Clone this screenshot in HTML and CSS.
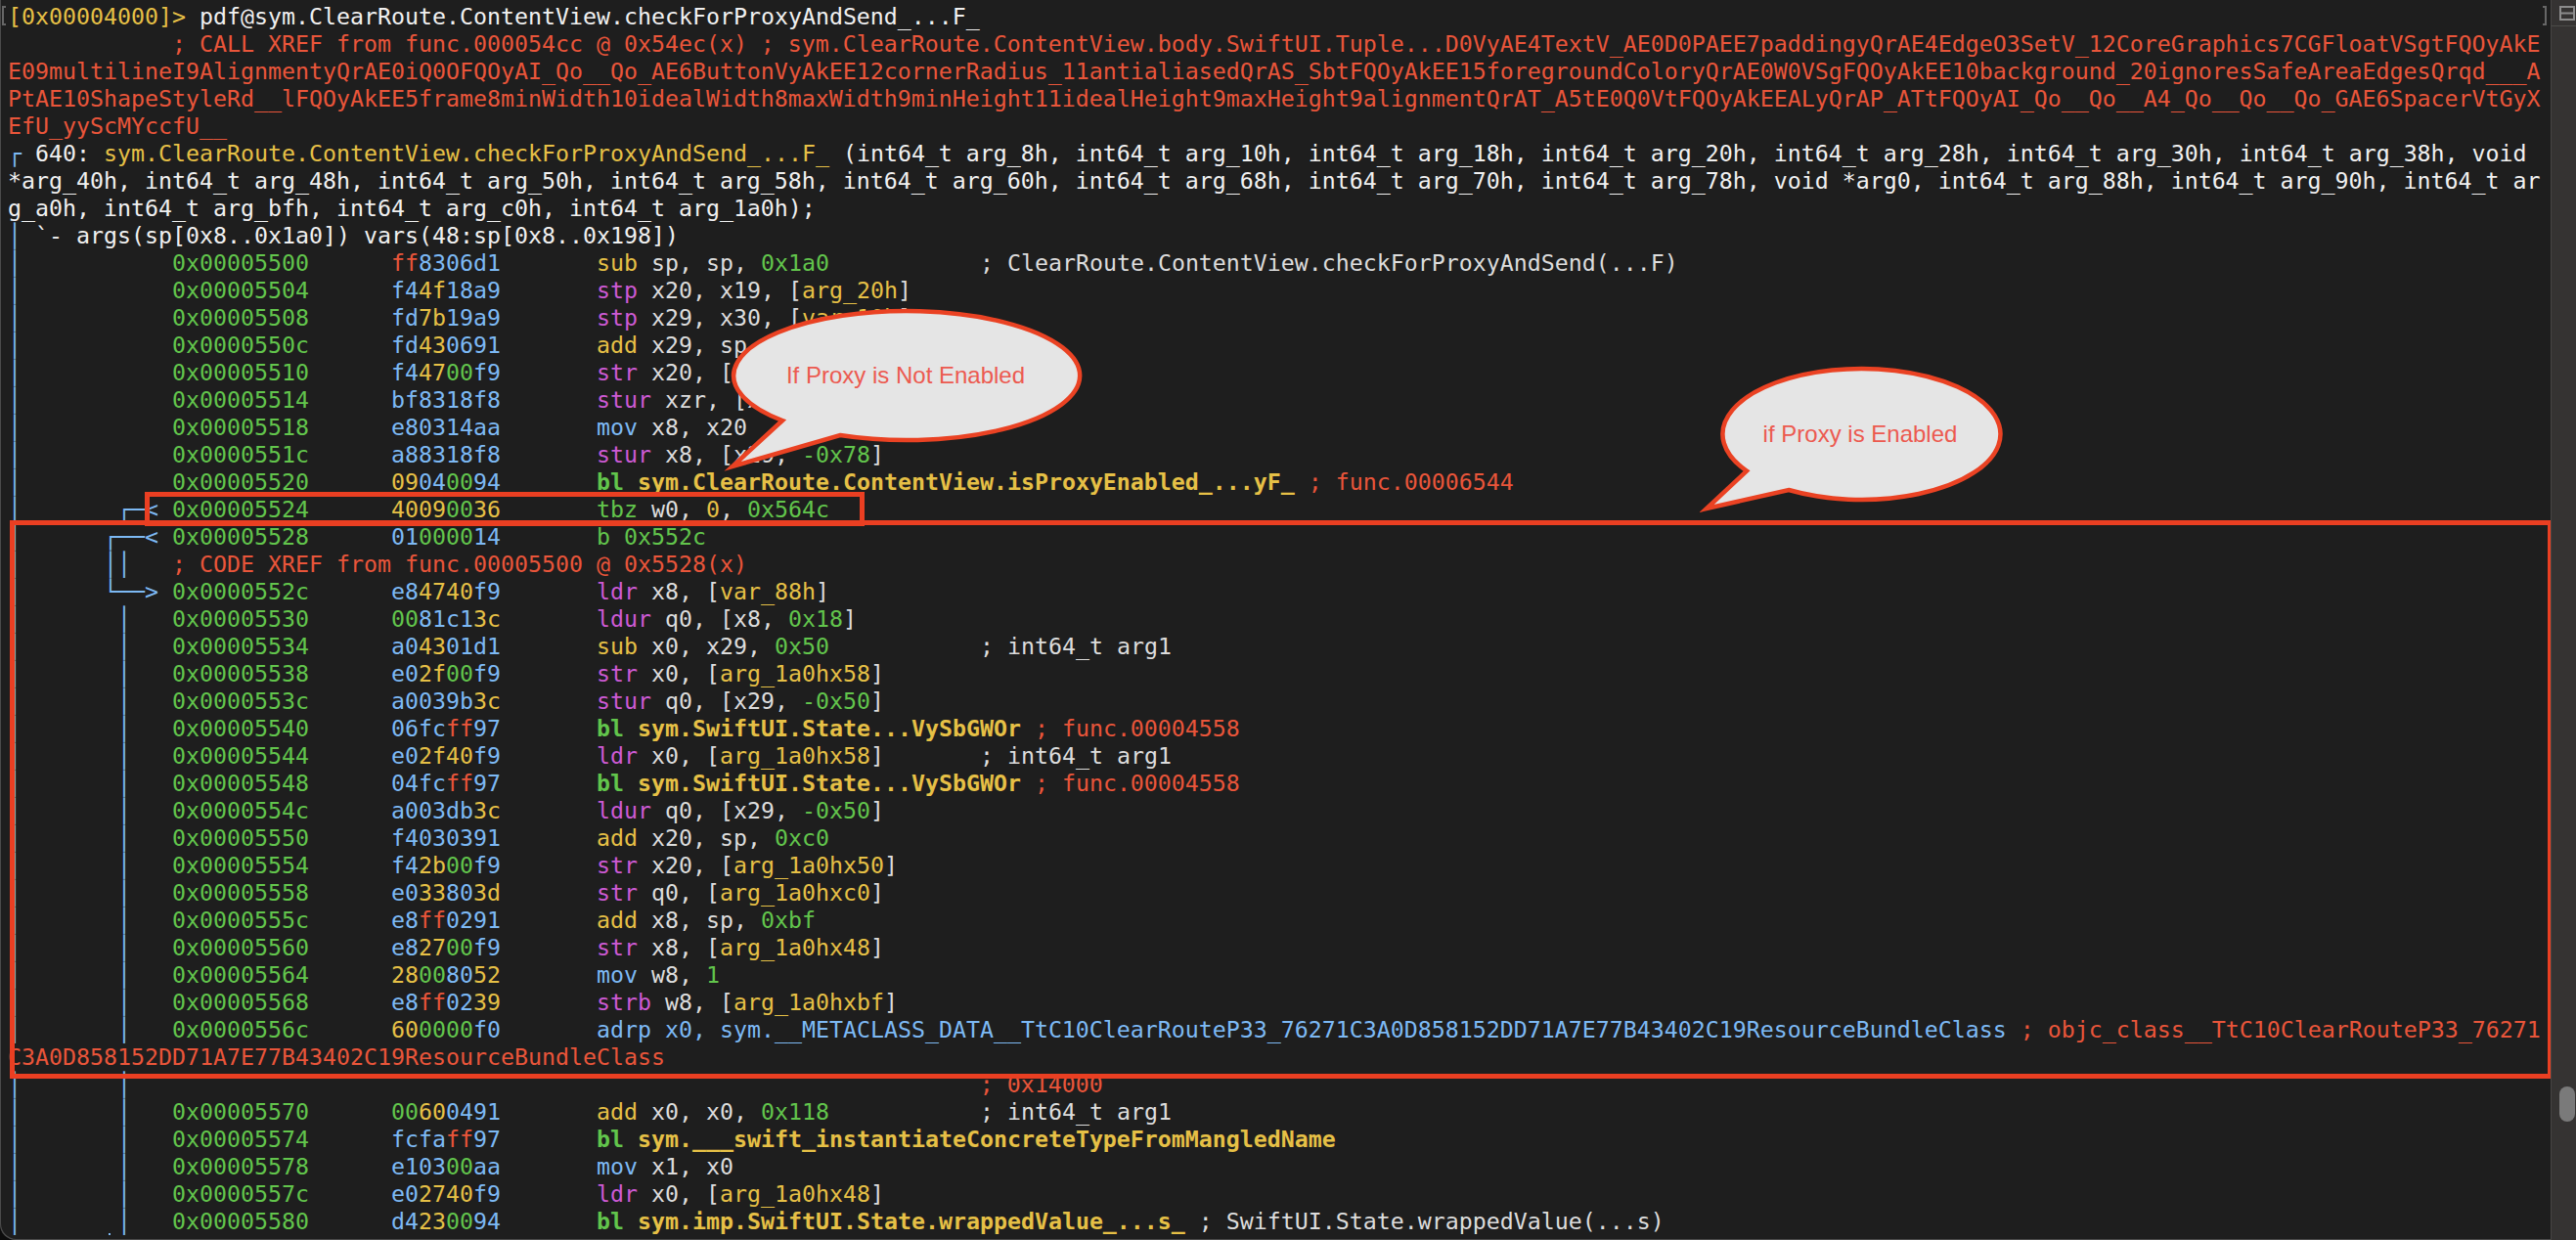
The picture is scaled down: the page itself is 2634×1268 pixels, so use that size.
FILE: index.html
```html
<!DOCTYPE html>
<html lang="en">
<head>
<meta charset="utf-8">
<title>radare2</title>
<link rel="stylesheet" href="styles.css">
</head>
<body>
<div class="window">
<main class="term">
<pre class="code"><span class="y">[0x00004000]&gt;</span> <span class="w">pdf@sym.ClearRoute.ContentView.checkForProxyAndSend_...F_</span>
<span class="r">            ; CALL XREF from func.000054cc @ 0x54ec(x) ; sym.ClearRoute.ContentView.body.SwiftUI.Tuple...D0VyAE4TextV_AE0D0PAEE7paddingyQrAE4EdgeO3SetV_12CoreGraphics7CGFloatVSgtFQOyAkE
E09multilineI9AlignmentyQrAE0iQ0OFQOyAI_Qo__Qo_AE6ButtonVyAkEE12cornerRadius_11antialiasedQrAS_SbtFQOyAkEE15foregroundColoryQrAE0W0VSgFQOyAkEE10background_20ignoresSafeAreaEdgesQrqd___A
PtAE10ShapeStyleRd__lFQOyAkEE5frame8minWidth10idealWidth8maxWidth9minHeight11idealHeight9maxHeight9alignmentQrAT_A5tE0Q0VtFQOyAkEEALyQrAP_ATtFQOyAI_Qo__Qo__A4_Qo__Qo__Qo_GAE6SpacerVtGyX
EfU_yyScMYccfU__</span>
<span class="b">┌</span> <span class="w">640:</span> <span class="y">sym.ClearRoute.ContentView.checkForProxyAndSend_...F_</span> <span class="w">(int64_t arg_8h, int64_t arg_10h, int64_t arg_18h, int64_t arg_20h, int64_t arg_28h, int64_t arg_30h, int64_t arg_38h, void
*arg_40h, int64_t arg_48h, int64_t arg_50h, int64_t arg_58h, int64_t arg_60h, int64_t arg_68h, int64_t arg_70h, int64_t arg_78h, void *arg0, int64_t arg_88h, int64_t arg_90h, int64_t ar
g_a0h, int64_t arg_bfh, int64_t arg_c0h, int64_t arg_1a0h);</span>
<span class="b">│</span> <span class="w">`- args(sp[0x8..0x1a0]) vars(48:sp[0x8..0x198])</span>
<span class="b">│</span>           <span class="g">0x00005500</span>      <span class="r">ff</span><span class="b">8306d1</span>       <span class="y">sub</span> sp, sp, <span class="g">0x1a0</span>           ; ClearRoute.ContentView.checkForProxyAndSend(...F)
<span class="b">│</span>           <span class="g">0x00005504</span>      <span class="b">f4</span><span class="y">4f</span><span class="b">18a9</span>       <span class="m">stp</span> x20, x19, [<span class="y">arg_20h</span>]
<span class="b">│</span>           <span class="g">0x00005508</span>      <span class="b">fd</span><span class="y">7b</span><span class="b">19a9</span>       <span class="m">stp</span> x29, x30, [<span class="y">var_10h</span>]
<span class="b">│</span>           <span class="g">0x0000550c</span>      <span class="b">fd</span><span class="y">43</span><span class="b">0691</span>       <span class="y">add</span> x29, sp, <span class="g">0x10</span>
<span class="b">│</span>           <span class="g">0x00005510</span>      <span class="b">f4</span><span class="y">47</span><span class="g">00</span><span class="b">f9</span>       <span class="m">str</span> x20, [<span class="y">var_88h</span>]
<span class="b">│</span>           <span class="g">0x00005514</span>      <span class="b">bf8318f8</span>       <span class="m">stur</span> xzr, [x29, <span class="g">-0x78</span>]
<span class="b">│</span>           <span class="g">0x00005518</span>      <span class="b">e80314aa</span>       <span class="b">mov</span> x8, x20
<span class="b">│</span>           <span class="g">0x0000551c</span>      <span class="b">a88318f8</span>       <span class="m">stur</span> x8, [x29, <span class="g">-0x78</span>]
<span class="b">│</span>           <span class="g">0x00005520</span>      <span class="y">09</span><span class="b">04</span><span class="g">00</span><span class="b">94</span>       <span class="g k">bl</span> <span class="y k">sym.ClearRoute.ContentView.isProxyEnabled_...yF_</span> <span class="r">; func.00006544</span>
<span class="b">│       ┌─&lt;</span> <span class="g">0x00005524</span>      <span class="y">4009</span><span class="g">00</span><span class="y">36</span>       <span class="g">tbz</span> w0, <span class="y">0</span>, <span class="g">0x564c</span>
<span class="b">│      ┌──&lt;</span> <span class="g">0x00005528</span>      <span class="b">01</span><span class="g">0000</span><span class="b">14</span>       <span class="g">b</span> <span class="g">0x552c</span>
<span class="b">│      ││</span>   <span class="r">; CODE XREF from func.00005500 @ 0x5528(x)</span>
<span class="b">│      └──&gt;</span> <span class="g">0x0000552c</span>      <span class="b">e8</span><span class="y">4740</span><span class="b">f9</span>       <span class="m">ldr</span> x8, [<span class="y">var_88h</span>]
<span class="b">│       │</span>   <span class="g">0x00005530</span>      <span class="g">00</span><span class="b">81c1</span><span class="y">3c</span>       <span class="m">ldur</span> q0, [x8, <span class="g">0x18</span>]
<span class="b">│       │</span>   <span class="g">0x00005534</span>      <span class="b">a0</span><span class="y">43</span><span class="b">01d1</span>       <span class="y">sub</span> x0, x29, <span class="g">0x50</span>           ; int64_t arg1
<span class="b">│       │</span>   <span class="g">0x00005538</span>      <span class="b">e0</span><span class="y">2f</span><span class="g">00</span><span class="b">f9</span>       <span class="m">str</span> x0, [<span class="y">arg_1a0hx58</span>]
<span class="b">│       │</span>   <span class="g">0x0000553c</span>      <span class="b">a0039b</span><span class="y">3c</span>       <span class="m">stur</span> q0, [x29, <span class="g">-0x50</span>]
<span class="b">│       │</span>   <span class="g">0x00005540</span>      <span class="b">06fc</span><span class="r">ff</span><span class="b">97</span>       <span class="g k">bl</span> <span class="y k">sym.SwiftUI.State...VySbGWOr</span> <span class="r">; func.00004558</span>
<span class="b">│       │</span>   <span class="g">0x00005544</span>      <span class="b">e0</span><span class="y">2f40</span><span class="b">f9</span>       <span class="m">ldr</span> x0, [<span class="y">arg_1a0hx58</span>]       ; int64_t arg1
<span class="b">│       │</span>   <span class="g">0x00005548</span>      <span class="b">04fc</span><span class="r">ff</span><span class="b">97</span>       <span class="g k">bl</span> <span class="y k">sym.SwiftUI.State...VySbGWOr</span> <span class="r">; func.00004558</span>
<span class="b">│       │</span>   <span class="g">0x0000554c</span>      <span class="b">a003db</span><span class="y">3c</span>       <span class="m">ldur</span> q0, [x29, <span class="g">-0x50</span>]
<span class="b">│       │</span>   <span class="g">0x00005550</span>      <span class="b">f4030391</span>       <span class="y">add</span> x20, sp, <span class="g">0xc0</span>
<span class="b">│       │</span>   <span class="g">0x00005554</span>      <span class="b">f4</span><span class="y">2b</span><span class="g">00</span><span class="b">f9</span>       <span class="m">str</span> x20, [<span class="y">arg_1a0hx50</span>]
<span class="b">│       │</span>   <span class="g">0x00005558</span>      <span class="b">e0</span><span class="y">33</span><span class="b">80</span><span class="y">3d</span>       <span class="m">str</span> q0, [<span class="y">arg_1a0hxc0</span>]
<span class="b">│       │</span>   <span class="g">0x0000555c</span>      <span class="b">e8</span><span class="r">ff</span><span class="b">0291</span>       <span class="y">add</span> x8, sp, <span class="g">0xbf</span>
<span class="b">│       │</span>   <span class="g">0x00005560</span>      <span class="b">e8</span><span class="y">27</span><span class="g">00</span><span class="b">f9</span>       <span class="m">str</span> x8, [<span class="y">arg_1a0hx48</span>]
<span class="b">│       │</span>   <span class="g">0x00005564</span>      <span class="y">28</span><span class="g">00</span><span class="b">80</span><span class="y">52</span>       <span class="b">mov</span> w8, <span class="g">1</span>
<span class="b">│       │</span>   <span class="g">0x00005568</span>      <span class="b">e8</span><span class="r">ff</span><span class="b">02</span><span class="y">39</span>       <span class="m">strb</span> w8, [<span class="y">arg_1a0hxbf</span>]
<span class="b">│       │</span>   <span class="g">0x0000556c</span>      <span class="y">60</span><span class="g">0000</span><span class="b">f0</span>       <span class="b">adrp x0, sym.__METACLASS_DATA__TtC10ClearRouteP33_76271C3A0D858152DD71A7E77B43402C19ResourceBundleClass</span> <span class="r">; objc_class__TtC10ClearRouteP33_76271
C3A0D858152DD71A7E77B43402C19ResourceBundleClass</span>
<span class="b">│       │</span>                                                              <span class="r">; 0x14000</span>
<span class="b">│       │</span>   <span class="g">0x00005570</span>      <span class="g">00</span><span class="y">60</span><span class="b">0491</span>       <span class="y">add</span> x0, x0, <span class="g">0x118</span>           ; int64_t arg1
<span class="b">│       │</span>   <span class="g">0x00005574</span>      <span class="b">fcfa</span><span class="r">ff</span><span class="b">97</span>       <span class="g k">bl</span> <span class="y k">sym.___swift_instantiateConcreteTypeFromMangledName</span>
<span class="b">│       │</span>   <span class="g">0x00005578</span>      <span class="b">e103</span><span class="g">00</span><span class="b">aa</span>       <span class="b">mov</span> x1, x0
<span class="b">│       │</span>   <span class="g">0x0000557c</span>      <span class="b">e0</span><span class="y">2740</span><span class="b">f9</span>       <span class="m">ldr</span> x0, [<span class="y">arg_1a0hx48</span>]
<span class="b">│       │</span>   <span class="g">0x00005580</span>      <span class="b">d4</span><span class="y">23</span><span class="g">00</span><span class="b">94</span>       <span class="g k">bl</span> <span class="y k">sym.imp.SwiftUI.State.wrappedValue_...s_</span> ; SwiftUI.State.wrappedValue(...s)</pre>
<span class="mark mark-open"></span>
<span class="mark mark-close"></span>
<span class="tick"></span>
<div class="frame frame-tbz"></div>
<div class="frame frame-block"></div>
<svg class="callouts" width="2634" height="1268" viewBox="0 0 2634 1268" aria-hidden="false">
  <path class="bubble" d="M800 430 L749 477 L859 445 A177 66 0 1 0 800 430 Z"/>
  <text class="bubble-text" x="926" y="392">If Proxy is Not Enabled</text>
  <path class="bubble" d="M1786 481.6 L1745 520 L1829 501 A142 67 0 1 0 1786 481.6 Z"/>
  <text class="bubble-text" x="1902" y="452">if Proxy is Enabled</text>
</svg>
</main>
<aside class="rail">
  <div class="split">
    <svg width="16" height="15" viewBox="0 0 16 15"><path class="split-icon" d="M1 1h14v13H1zM1 7.5h14"/></svg>
  </div>
  <div class="thumb"></div>
</aside>
</div>
</body>
</html>
```
FILE: styles.css
```css
* { box-sizing: border-box; }
html, body { margin: 0; height: 100%; background: #0c0c0c; overflow: hidden; }
.window {
  display: flex;
  height: 1268px;
  width: 2634px;
  background: #1e1e1e;
  border-bottom-left-radius: 16px;
  overflow: hidden;
  box-shadow: inset 1px -1px 0 #4a4a4a;
}
.term { position: relative; flex: 1; min-width: 0; height: 1263px; overflow: hidden; }
.code {
  margin: 0;
  padding: 3px 0 0 8px;
  font: 23.25px/28px "DejaVu Sans Mono", monospace;
  color: #dcdcdc;
  white-space: pre;
}
.r { color: #e9553a; }
.g { color: #62c54c; }
.b { color: #7db9f4; }
.y { color: #e6c046; }
.m { color: #cd5ad4; }
.w { color: #f0f0f0; }
.k { font-weight: 700; }
.mark { position: absolute; top: 6px; width: 4px; height: 20px; border: 2px solid #666; }
.mark-open { left: 2px; border-right: 0; }
.mark-close { left: 2600px; border-left: 0; }
.tick { position: absolute; left: 111px; top: 1261px; width: 2px; height: 2px; background: #7db9f4; }
.frame { position: absolute; border: 5px solid #ea3f22; }
.frame-tbz { left: 148px; top: 503px; width: 736px; height: 35px; }
.frame-block { left: 10px; top: 532px; width: 2600px; height: 571px; }
.callouts { position: absolute; left: 0; top: 0; }
.bubble { fill: #e5e5e5; stroke: #ea4223; stroke-width: 4.5; stroke-miterlimit: 12; }
.bubble-text { font: 24px "Liberation Sans", Arial, sans-serif; fill: #ec5a50; text-anchor: middle; }
.rail {
  flex: none;
  width: 26px;
  background: #353332;
  border-left: 1px solid #474644;
}
.split { height: 27px; padding: 6px 0 0 8px; border-bottom: 1px solid #4c4b49; }
.split svg { display: block; }
.split-icon { fill: none; stroke: #8c8c8c; stroke-width: 2; }
.thumb { width: 16px; height: 36px; margin: 1084px 0 0 8px; border-radius: 8px; background: #7a7a7a; }
```
